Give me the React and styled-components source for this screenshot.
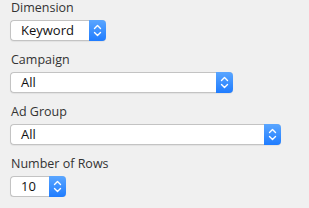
import React from "react"
import styled, { createGlobalStyle } from "styled-components"

const GlobalStyle = createGlobalStyle`
  html, body {
    margin: 0;
    padding: 0;
    background: #f0f0f0;
  }
  body {
    font-family: "Open Sans", "DejaVu Sans", sans-serif;
  }
`

const Panel = styled.div`
  padding: 0 10px;
  display: flex;
  flex-direction: column;
  gap: 11px;
`

const Field = styled.div`
  display: flex;
  flex-direction: column;
  align-items: flex-start;
  gap: 4px;
`

const Label = styled.label`
  font-size: 12.5px;
  line-height: 16px;
  color: #333;
  padding-left: 1px;
`

const SelectBox = styled.div`
  width: ${(p) => p.width}px;
  height: 21px;
  box-sizing: border-box;
  display: flex;
  align-items: stretch;
  background: #fff;
  border: 1px solid #c3c3c3;
  border-right: none;
  border-radius: 4px;
  box-shadow: 0 1px 1px rgba(0, 0, 0, 0.06);
`

const Value = styled.span`
  flex: 1;
  font-size: 13px;
  line-height: 19px;
  color: #111;
  padding-left: 10px;
  white-space: nowrap;
  overflow: hidden;
`

const Stepper = styled.span`
  width: 17px;
  margin: -1px 0;
  display: flex;
  align-items: center;
  justify-content: center;
  background: linear-gradient(#5aa6ff, #1f7cff);
  border-radius: 0 4px 4px 0;
`

const Chevrons = () => (
  <svg width="9" height="13" viewBox="0 0 9 13" fill="none">
    <path d="M1.5 4.5 L4.5 1.5 L7.5 4.5" stroke="#fff" strokeWidth="1.4" strokeLinecap="round" strokeLinejoin="round" />
    <path d="M1.5 8.5 L4.5 11.5 L7.5 8.5" stroke="#fff" strokeWidth="1.4" strokeLinecap="round" strokeLinejoin="round" />
  </svg>
)

const Select = ({ width, value }) => (
  <SelectBox width={width}>
    <Value>{value}</Value>
    <Stepper>
      <Chevrons />
    </Stepper>
  </SelectBox>
)

const fields = [
  { label: "Dimension", value: "Keyword", width: 96 },
  { label: "Campaign", value: "All", width: 223 },
  { label: "Ad Group", value: "All", width: 271 },
  { label: "Number of Rows", value: "10", width: 56 },
]

export default function App() {
  return (
    <>
      <GlobalStyle />
      <Panel>
        {fields.map((f) => (
          <Field key={f.label}>
            <Label>{f.label}</Label>
            <Select width={f.width} value={f.value} />
          </Field>
        ))}
      </Panel>
    </>
  )
}
